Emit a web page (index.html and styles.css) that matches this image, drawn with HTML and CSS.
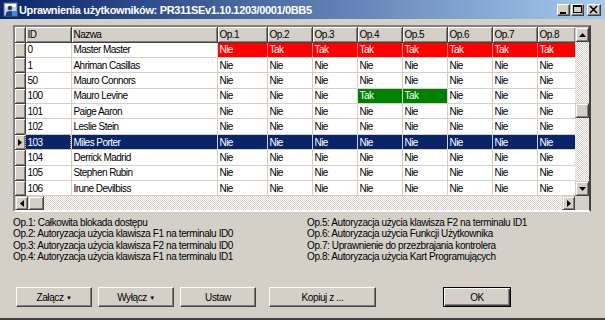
FILE: index.html
```html
<!DOCTYPE html>
<html lang="pl">
<head>
  <meta charset="UTF-8">
  <title>Uprawnienia użytkowników</title>
  <link rel="stylesheet" href="styles.css">
</head>
<body>

<div class="window">
  <div class="titlebar">
    <svg class="title-icon" width="15" height="15" viewBox="0 0 15 15">
      <rect x="1" y="1" width="13" height="13" fill="#c8d4e4" stroke="#5a6e96"/>
      <rect x="2" y="2" width="11" height="3" fill="#ffffff"/>
      <circle cx="7" cy="6" r="2.3" fill="#1c3c7c"/>
      <path d="M2.5 14 L3.5 10 Q7 8 10.5 10 L11.5 14 Z" fill="#1c3c7c"/>
      <rect x="9" y="9" width="5" height="5" fill="#3f8ad8"/>
    </svg>
    <span class="title">Uprawnienia użytkowników: PR311SEv1.10.1203/0001/0BB5</span>
    <div class="wbtns">
      <div class="wbtn"><svg width="13" height="12" viewBox="0 0 13 12"><rect x="3" y="8" width="6" height="2" fill="#000"/></svg></div>
      <div class="wbtn"><svg width="13" height="12" viewBox="0 0 13 12"><rect x="2.5" y="1.5" width="8" height="7" fill="none" stroke="#000"/><rect x="2" y="1" width="9" height="2" fill="#000"/></svg></div>
      <div class="wbtn close"><svg width="14" height="12" viewBox="0 0 14 12"><path d="M3 2 L10 9 M10 2 L3 9" stroke="#000" stroke-width="1.6"/></svg></div>
    </div>
  </div>

  <div class="content">
    <div class="grid">
      <div class="grid-left">
        <table class="users">
          <colgroup>
            <col style="width:10px"><col style="width:46px"><col style="width:146px">
            <col style="width:50px"><col style="width:45px"><col style="width:45px"><col style="width:45px">
            <col style="width:45px"><col style="width:45px"><col style="width:45px"><col style="width:38px">
          </colgroup>
          <thead>
            <tr>
              <th class="rh"></th><th>ID</th><th>Nazwa</th>
              <th>Op.1</th><th>Op.2</th><th>Op.3</th><th>Op.4</th>
              <th>Op.5</th><th>Op.6</th><th>Op.7</th><th>Op.8</th>
            </tr>
          </thead>
          <tbody id="rows"></tbody>
        </table>
        <div class="hscroll">
          <div class="sbtn"><svg width="4" height="7" viewBox="0 0 4 7"><path d="M4 0 L0 3.5 L4 7 Z" fill="#000"/></svg></div>
          <div class="sthumb"></div>
          <div class="strack"></div>
          <div class="sbtn"><svg width="4" height="7" viewBox="0 0 4 7"><path d="M0 0 L4 3.5 L0 7 Z" fill="#000"/></svg></div>
        </div>
      </div>
      <div class="grid-right">
        <div class="vscroll">
          <div class="sbtn"><svg width="7" height="4" viewBox="0 0 7 4"><path d="M0 4 L3.5 0 L7 4 Z" fill="#000"/></svg></div>
          <div class="strack top"></div>
          <div class="sthumb"></div>
          <div class="strack"></div>
          <div class="sbtn"><svg width="7" height="4" viewBox="0 0 7 4"><path d="M0 0 L3.5 4 L7 0 Z" fill="#000"/></svg></div>
        </div>
        <div class="corner"></div>
      </div>
    </div>

    <div class="legend">
      <div>Op.1: Całkowita blokada dostępu</div>
      <div>Op.5: Autoryzacja użycia klawisza F2 na terminalu ID1</div>
      <div>Op.2: Autoryzacja użycia klawisza F1 na terminalu ID0</div>
      <div>Op.6: Autoryzacja użycia Funkcji Użytkownika</div>
      <div>Op.3: Autoryzacja użycia klawisza F2 na terminalu ID0</div>
      <div>Op.7: Uprawnienie do przezbrajania kontrolera</div>
      <div>Op.4: Autoryzacja użycia klawisza F1 na terminalu ID1</div>
      <div>Op.8: Autoryzacja użycia Kart Programujących</div>
    </div>

    <div class="buttons">
      <button class="btn b-zal">Załącz <span class="caret">&#9660;</span></button>
      <button class="btn b-wyl">Wyłącz <span class="caret">&#9660;</span></button>
      <button class="btn b-ust">Ustaw</button>
      <button class="btn b-kop">Kopiuj z ...</button>
      <button class="btn b-ok">OK</button>
    </div>
  </div>
</div>

<script>
const users = [
  ['0', 'Master Master', ['N', 'T', 'T', 'T', 'T', 'T', 'T', 'T'], 'red'],
  ['1', 'Ahriman Casillas'],
  ['50', 'Mauro Connors'],
  ['100', 'Mauro Levine', ['N', 'N', 'N', 'T', 'T', 'N', 'N', 'N']],
  ['101', 'Paige Aaron'],
  ['102', 'Leslie Stein'],
  ['103', 'Miles Porter', null, 'sel'],
  ['104', 'Derrick Madrid'],
  ['105', 'Stephen Rubin'],
  ['106', 'Irune Devilbiss']
];

const tbody = document.getElementById('rows');
users.forEach(u => {
  const tr = document.createElement('tr');
  if (u[3] === 'sel') tr.className = 'selected';
  const rh = document.createElement('td');
  rh.className = 'rh';
  if (u[3] === 'sel') rh.innerHTML = '<svg width="4" height="7" viewBox="0 0 4 7"><path d="M0 0 L4 3.5 L0 7 Z" fill="#000"/></svg>';
  tr.appendChild(rh);
  const id = document.createElement('td');
  id.textContent = u[0];
  if (u[3] === 'sel') id.className = 'focus';
  tr.appendChild(id);
  const name = document.createElement('td');
  name.textContent = u[1];
  tr.appendChild(name);
  const ops = u[2] || ['N', 'N', 'N', 'N', 'N', 'N', 'N', 'N'];
  ops.forEach((o, i) => {
    const td = document.createElement('td');
    td.textContent = o === 'T' ? 'Tak' : 'Nie';
    if (u[3] === 'red') td.className = 'red';
    else if (o === 'T') td.className = 'green';
    tr.appendChild(td);
  });
  tbody.appendChild(tr);
});
</script>
</body>
</html>
```

FILE: styles.css
```css
* {
  box-sizing: border-box;
}
body {
  margin: 0;
  font-family: 'Liberation Sans', Arial, sans-serif;
  font-size: 10px;
  color: #000;
}
.window {
  width: 605px;
  height: 320px;
  background: #d4d0c8;
  border-bottom: 2px solid #404040;
  display: flex;
  flex-direction: column;
}
.titlebar {
  height: 19px;
  flex: none;
  display: flex;
  align-items: center;
  padding-left: 3px;
  background: linear-gradient(to right, #0a246a, #a6caf0);
  color: #fff;
}
.title-icon {
  flex: none;
  margin-right: 1px;
}
.title {
  flex: 1;
  font-weight: bold;
  font-size: 11px;
  letter-spacing: -0.35px;
  white-space: nowrap;
}
.wbtns {
  display: flex;
  margin-right: 4px;
}
.wbtn {
  width: 13px;
  height: 12px;
  background: #d4d0c8;
  border: 1px solid;
  border-color: #fff #404040 #404040 #fff;
  box-shadow: inset -1px -1px #808080;
  margin-left: 1px;
  display: flex;
  align-items: center;
  justify-content: center;
}
.wbtn svg {
  flex: none;
}
.wbtn.close {
  width: 14px;
  margin-left: 3px;
}
.content {
  flex: 1;
  display: flex;
  flex-direction: column;
  padding: 6px 0 11px 13px;
}
.grid {
  width: 578px;
  height: 187px;
  display: flex;
  border: 2px solid;
  border-color: #808080 #404040 #fff #808080;
  box-shadow: inset 1px 1px #404040;
  background: #d4d0c8;
}
.grid-left {
  width: 560px;
  display: flex;
  flex-direction: column;
}
.grid-right {
  width: 14px;
  display: flex;
  flex-direction: column;
}
.users {
  border-collapse: collapse;
  table-layout: fixed;
  width: 560px;
  background: #fff;
  letter-spacing: -0.55px;
}
.users th {
  height: 15px;
  padding: 0 2px;
  font-weight: normal;
  text-align: left;
  background: #d4d0c8;
  border-right: 1px solid #404040;
  border-bottom: 1px solid #404040;
  box-shadow: inset 1px 1px #fff, inset -1px -1px #808080;
  white-space: nowrap;
  overflow: hidden;
}
.users td {
  height: 15.4px;
  padding: 0 2px;
  border-right: 1px solid #d4d0c8;
  border-bottom: 1px solid #d4d0c8;
  white-space: nowrap;
  overflow: hidden;
}
.users td.rh {
  padding: 0;
  background: #d4d0c8;
  border-right: 1px solid #404040;
  border-bottom: 1px solid #404040;
  box-shadow: inset 1px 1px #fff, inset -1px -1px #808080;
  text-align: center;
}
.users td.rh svg {
  display: block;
  margin: 0 auto;
}
.users td.red {
  background: #ff0000;
  color: #fff;
  border-right-color: #ff8080;
}
.users td.green {
  background: #008000;
  color: #fff;
}
.users tr.selected td {
  background: #0a246a;
  color: #fff;
}
.users tr.selected td.rh {
  background: #d4d0c8;
}
.users td.focus {
  outline: 1px dotted #c8b88a;
  outline-offset: -1px;
}
.hscroll {
  height: 14px;
  display: flex;
}
.vscroll {
  flex: 1;
  display: flex;
  flex-direction: column;
}
.sbtn {
  flex: none;
  width: 13px;
  height: 14px;
  background: #d4d0c8;
  border: 1px solid;
  border-color: #d4d0c8 #404040 #404040 #d4d0c8;
  box-shadow: inset 1px 1px #fff, inset -1px -1px #808080;
  display: flex;
  align-items: center;
  justify-content: center;
}
.vscroll .sbtn {
  width: 14px;
  height: 15px;
}
.sthumb {
  flex: none;
  width: 16px;
  background: #d4d0c8;
  border: 1px solid;
  border-color: #d4d0c8 #404040 #404040 #d4d0c8;
  box-shadow: inset 1px 1px #fff, inset -1px -1px #808080;
}
.vscroll .sthumb {
  width: 14px;
  height: 15px;
}
.strack {
  flex: 1;
  background: repeating-conic-gradient(#fff 0 25%, #d4d0c8 0 50%) 0 0 / 2px 2px;
}
.vscroll .strack.top {
  flex: none;
  height: 61px;
}
.corner {
  height: 14px;
  background: #d4d0c8;
}
.legend {
  margin-top: 5px;
  display: grid;
  grid-template-columns: 294px 280px;
  line-height: 11.3px;
  letter-spacing: -0.4px;
  white-space: nowrap;
}
.buttons {
  margin-top: auto;
  display: flex;
  padding-left: 3px;
}
.btn {
  height: 20px;
  padding: 0;
  font-family: 'Liberation Sans', Arial, sans-serif;
  font-size: 10px;
  letter-spacing: -0.4px;
  color: #000;
  background: #d4d0c8;
  border: 1px solid;
  border-color: #fff #404040 #404040 #fff;
  box-shadow: inset -1px -1px #808080;
}
.caret {
  font-size: 6px;
  vertical-align: 1px;
}
.b-zal {
  width: 76px;
  margin-right: 6px;
}
.b-wyl {
  width: 76px;
  margin-right: 6px;
}
.b-ust {
  width: 76px;
  margin-right: 13px;
}
.b-kop {
  width: 107px;
  margin-right: 67px;
}
.b-ok {
  width: 68px;
  border: 1px solid #000;
  box-shadow: inset 1px 1px #fff, inset -1px -1px #404040, inset -2px -2px #808080;
}
```
